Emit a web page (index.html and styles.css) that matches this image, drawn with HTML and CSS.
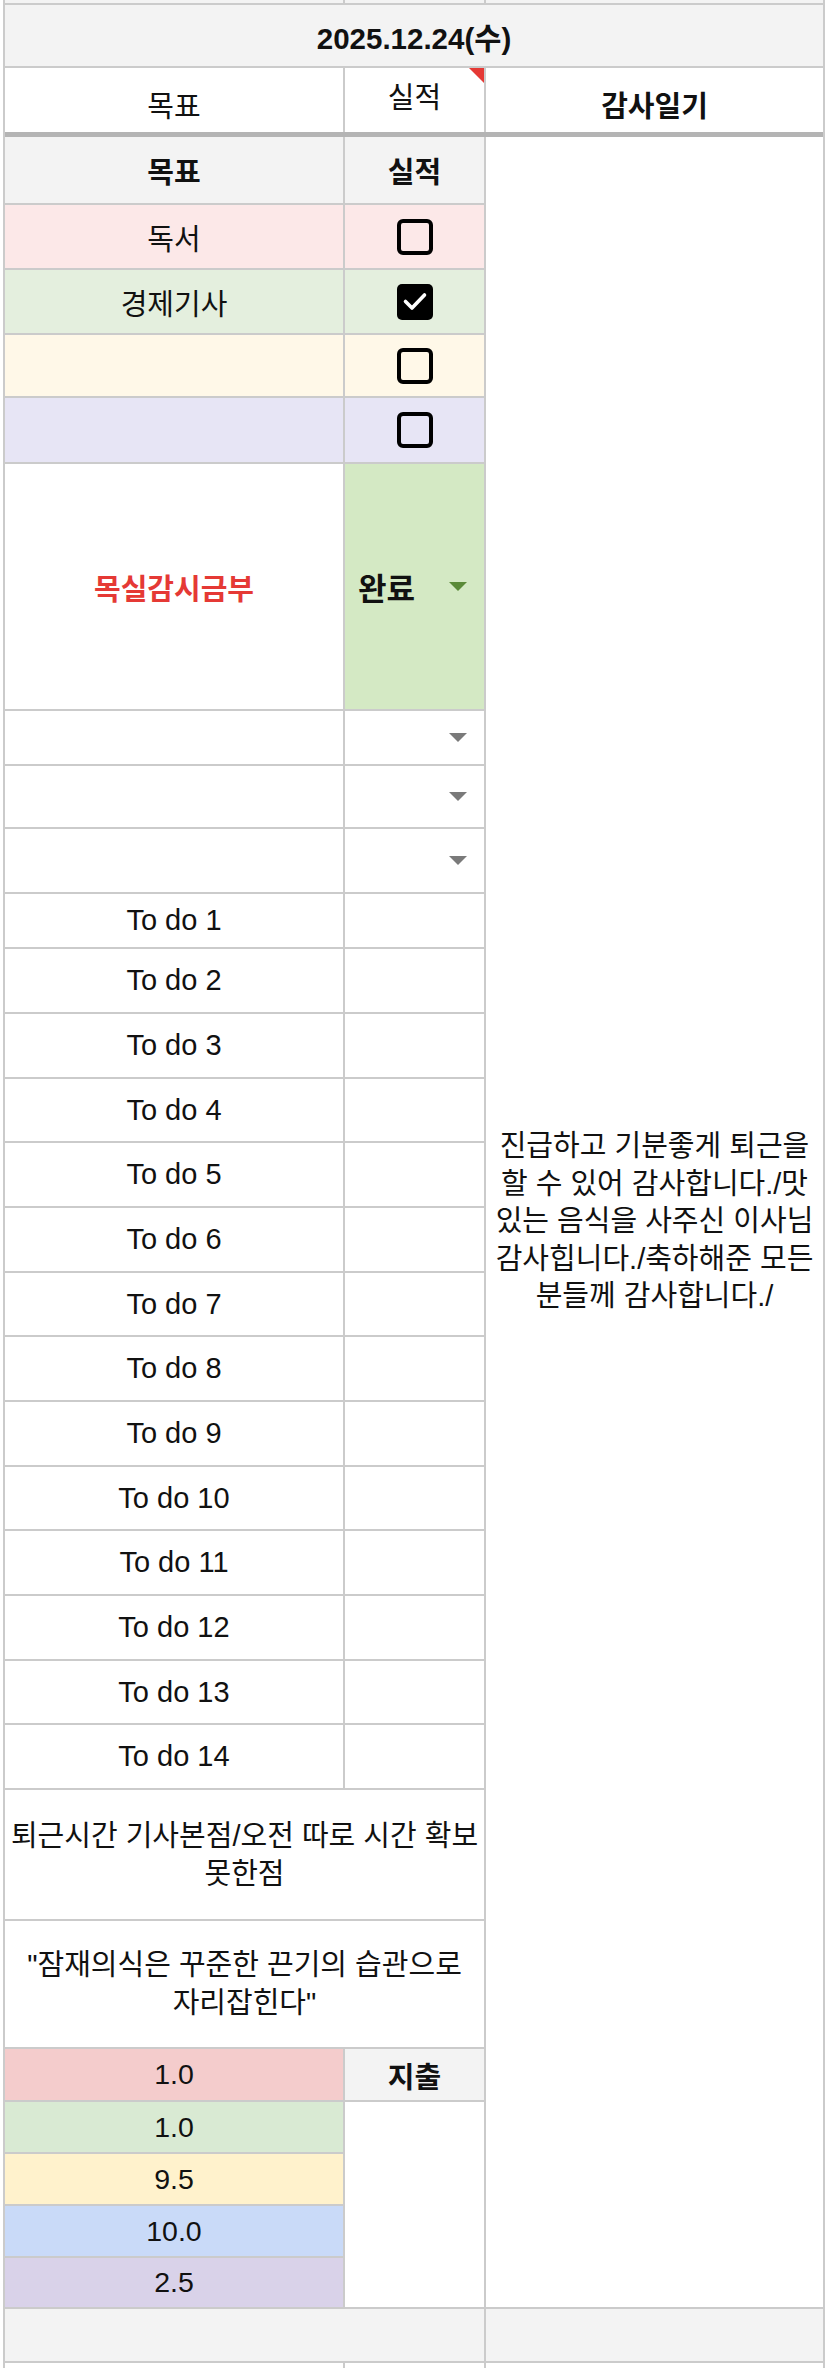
FILE: index.html
```html
<!DOCTYPE html>
<html lang="ko">
<head>
<meta charset="utf-8">
<title>2025.12.24 감사일기</title>
<link rel="stylesheet" href="styles.css">
</head>
<body>
<div class="sheet">
  <!-- top strip (previous row) -->
  <div class="cell gray"></div>
  <div class="cell gray"></div>
  <div class="cell gray"></div>

  <div class="cell gray span-c3 bold date">2025.12.24(수)</div>

  <div class="cell white bottom ko">목표</div>
  <div class="cell white mid ko note">실적</div>
  <div class="cell white bottom ko bold">감사일기</div>

  <div class="sep span-c3"></div>

  <div class="cell gray bold ko">목표</div>
  <div class="cell gray bold ko">실적</div>
  <div class="cell white diary span-r30 ko">진급하고 기분좋게 퇴근을<br>할 수 있어 감사합니다./맛<br>있는 음식을 사주신 이사님<br>감사힙니다./축하해준 모든<br>분들께 감사합니다./</div>

  <div class="cell pink ko">독서</div>
  <div class="cell pink"><svg class="cb" width="36" height="36" viewBox="0 0 36 36"><rect x="2" y="2" width="32" height="32" rx="4" fill="none" stroke="#000" stroke-width="4"/></svg></div>

  <div class="cell green ko">경제기사</div>
  <div class="cell green"><svg class="cb" width="36" height="36" viewBox="0 0 36 36"><rect x="0" y="0" width="36" height="36" rx="5" fill="#000"/><path d="M8.5 17.5 L15 24 L27.5 11" fill="none" stroke="#fff" stroke-width="3.6" stroke-linecap="round" stroke-linejoin="round"/></svg></div>

  <div class="cell yellow"></div>
  <div class="cell yellow"><svg class="cb" width="36" height="36" viewBox="0 0 36 36"><rect x="2" y="2" width="32" height="32" rx="4" fill="none" stroke="#000" stroke-width="4"/></svg></div>

  <div class="cell purple"></div>
  <div class="cell purple"><svg class="cb" width="36" height="36" viewBox="0 0 36 36"><rect x="2" y="2" width="32" height="32" rx="4" fill="none" stroke="#000" stroke-width="4"/></svg></div>

  <div class="cell white ko bold red">목실감시금부</div>
  <div class="cell done"><span class="chip bold">완료</span><span class="arrow arrow-green"></span></div>

  <div class="cell white"></div>
  <div class="cell white dd"><span class="arrow"></span></div>
  <div class="cell white"></div>
  <div class="cell white dd"><span class="arrow"></span></div>
  <div class="cell white"></div>
  <div class="cell white dd"><span class="arrow"></span></div>

  <div class="cell white latin">To do 1</div><div class="cell white"></div>
  <div class="cell white latin">To do 2</div><div class="cell white"></div>
  <div class="cell white latin">To do 3</div><div class="cell white"></div>
  <div class="cell white latin">To do 4</div><div class="cell white"></div>
  <div class="cell white latin">To do 5</div><div class="cell white"></div>
  <div class="cell white latin">To do 6</div><div class="cell white"></div>
  <div class="cell white latin">To do 7</div><div class="cell white"></div>
  <div class="cell white latin">To do 8</div><div class="cell white"></div>
  <div class="cell white latin">To do 9</div><div class="cell white"></div>
  <div class="cell white latin">To do 10</div><div class="cell white"></div>
  <div class="cell white latin">To do 11</div><div class="cell white"></div>
  <div class="cell white latin">To do 12</div><div class="cell white"></div>
  <div class="cell white latin">To do 13</div><div class="cell white"></div>
  <div class="cell white latin">To do 14</div><div class="cell white"></div>

  <div class="cell white span-c2 ko multi">퇴근시간 기사본점/오전 따로 시간 확보<br>못한점</div>
  <div class="cell white span-c2 ko multi">"잠재의식은 꾸준한 끈기의 습관으로<br>자리잡힌다"</div>

  <div class="cell n-red num">1.0</div>
  <div class="cell gray bold ko">지출</div>
  <div class="cell n-green num">1.0</div>
  <div class="cell white span-r4"></div>
  <div class="cell n-yellow num">9.5</div>
  <div class="cell n-blue num">10.0</div>
  <div class="cell n-purple num">2.5</div>

  <div class="cell gray span-c2"></div>
  <div class="cell gray"></div>

  <div class="cell white"></div>
  <div class="cell white"></div>
  <div class="cell white"></div>
</div>
</body>
</html>
```

FILE: styles.css
```css
html, body {
  margin: 0;
  padding: 0;
  background: #ffffff;
  overflow: hidden;
}

body {
  font-family: "Liberation Sans", "Noto Sans CJK KR", sans-serif;
  color: #111;
}

.sheet {
  margin-left: 3px;
  width: 818px;
  padding: 0 2px;
  display: grid;
  grid-template-columns: 338px 139px 337px;
  grid-template-rows:
    3px 61px 64px 1px 66px
    63px 63px 61px 64px
    245px 53px 61px 63px
    53px
    63px 63px 62px 63px 63px 62px 63px 63px 62px 63px 63px 62px 63px
    129px 126px
    51px 50px 50px 50px 49px
    52px 5px;
  gap: 2px;
  background: #cbcbcb;
}

.cell {
  display: flex;
  align-items: center;
  justify-content: center;
  text-align: center;
  min-width: 0;
  overflow: hidden;
}

.sep {
  margin: -2px 0;
  background: #b4b4b4;
}

.span-c2 { grid-column: span 2; }
.span-c3 { grid-column: span 3; }
.span-r4 { grid-row: span 4; }
.span-r30 { grid-row: span 30; }

.latin { font-size: 29px; }
.date { font-size: 29.5px; }
.num { font-size: 28.5px; }
.ko { font-size: 29px; }
.chip { font-size: 31px; }
.bold { font-weight: bold; }

.white { background: #ffffff; }
.gray { background: #f3f3f3; }
.pink { background: #fce8e8; }
.green { background: #e4efde; }
.yellow { background: #fff8e8; }
.purple { background: #e7e5f5; }

.n-red { background: #f4cccc; }
.n-green { background: #d9ead3; }
.n-yellow { background: #fff2cc; }
.n-blue { background: #c9daf8; }
.n-purple { background: #d9d2e9; }

.bottom {
  align-items: flex-end;
  padding-bottom: 7px;
}

.mid {
  align-items: center;
  padding-bottom: 10px;
}

.note {
  position: relative;
}

.note::after {
  content: "";
  position: absolute;
  top: 0;
  right: 0;
  border-top: 15px solid #e53935;
  border-left: 15px solid transparent;
}

.red { color: #e53935; }

.diary {
  padding: 0 4px;
  line-height: 37.5px;
  white-space: nowrap;
}

.multi {
  padding: 0 3px;
  line-height: 38px;
  white-space: nowrap;
}

.done {
  background: #d4e9c4;
  justify-content: space-between;
  padding: 0 17px 0 13px;
}

.dd {
  justify-content: flex-end;
  padding-right: 17px;
}

.arrow {
  width: 0;
  height: 0;
  border-left: 9px solid transparent;
  border-right: 9px solid transparent;
  border-top: 9px solid #7a7a7a;
}

.arrow-green {
  border-top-color: #5a8a38;
}

.cb {
  display: block;
}
```
